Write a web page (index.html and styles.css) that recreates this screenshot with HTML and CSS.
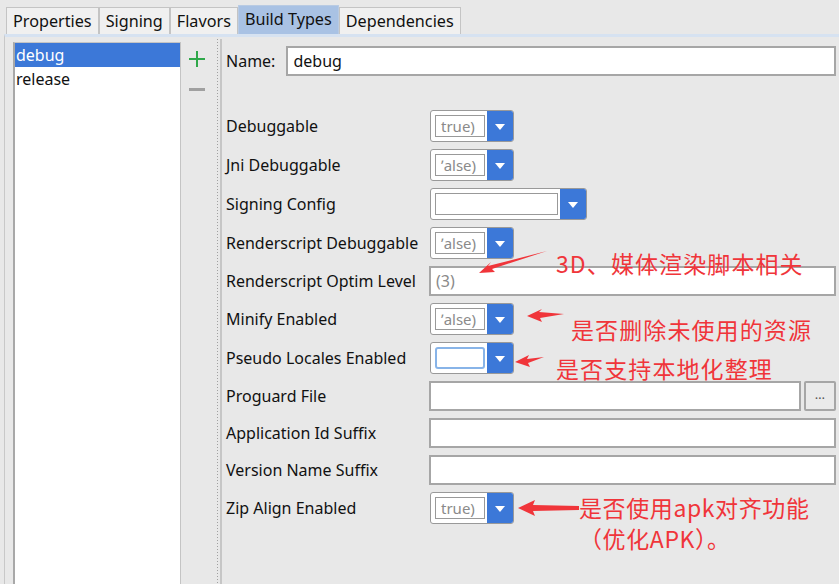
FILE: index.html
```html
<!DOCTYPE html>
<html lang="en">
<head>
  <meta charset="UTF-8" />
  <title>Build Types</title>
  <link rel="stylesheet" href="styles.css">
</head>
<body>
  <div class="tabs">
    <div class="tab">Properties</div>
    <div class="tab">Signing</div>
    <div class="tab">Flavors</div>
    <div class="tab active">Build Types</div>
    <div class="tab">Dependencies</div>
  </div>
  <div class="panel">
    <div class="grip"></div>
    <div class="list">
      <div class="item selected">debug</div>
      <div class="item">release</div>
    </div>
    <div class="tools">
      <span class="plus"></span>
      <span class="minus"></span>
    </div>
    <div class="splitter"></div>
    <div class="form">
      <div class="name-row">
        <span class="label">Name:</span>
        <div class="field name-field">debug</div>
      </div>
      <div class="rows">
        <div class="row combo-row">
          <span class="label">Debuggable</span>
          <div class="combo"><div class="value">true)</div><div class="drop"></div></div>
        </div>
        <div class="row combo-row">
          <span class="label">Jni Debuggable</span>
          <div class="combo"><div class="value">ʹalse)</div><div class="drop"></div></div>
        </div>
        <div class="row combo-row">
          <span class="label">Signing Config</span>
          <div class="combo wide"><div class="value"></div><div class="drop"></div></div>
        </div>
        <div class="row combo-row">
          <span class="label">Renderscript Debuggable</span>
          <div class="combo"><div class="value">ʹalse)</div><div class="drop"></div></div>
        </div>
        <div class="row text-row">
          <span class="label">Renderscript Optim Level</span>
          <div class="field hint">(3)</div>
        </div>
        <div class="row combo-row">
          <span class="label">Minify Enabled</span>
          <div class="combo"><div class="value">ʹalse)</div><div class="drop"></div></div>
        </div>
        <div class="row combo-row">
          <span class="label">Pseudo Locales Enabled</span>
          <div class="combo"><div class="value focus"></div><div class="drop"></div></div>
        </div>
        <div class="row text-row">
          <span class="label">Proguard File</span>
          <div class="field"></div>
          <div class="more">…</div>
        </div>
        <div class="row text-row">
          <span class="label">Application Id Suffix</span>
          <div class="field"></div>
        </div>
        <div class="row text-row">
          <span class="label">Version Name Suffix</span>
          <div class="field"></div>
        </div>
        <div class="row combo-row">
          <span class="label">Zip Align Enabled</span>
          <div class="combo"><div class="value">true)</div><div class="drop"></div></div>
        </div>
      </div>

      <svg class="arrows" width="617" height="545" viewBox="222 40 617 545">
        <polygon points="548,251 489,266 492,262 480,273 496,272 493,269" fill="#f0353a"/>
        <polygon points="565,314 540,312 543,309 528,316 543,322 541,318" fill="#f0353a"/>
        <polygon points="545,357 528,359 530,355 516,362 531,367 529,363" fill="#f0353a"/>
        <polygon points="580,506 534,505 536,500 519,508 536,516 534,511 580,510" fill="#f0353a"/>
      </svg>
      <div class="note n1">3D、媒体渲染脚本相关</div>
      <div class="note n2">是否删除未使用的资源</div>
      <div class="note n3">是否支持本地化整理</div>
      <div class="note n4">是否使用apk对齐功能<br>（优化APK）。</div>
    </div>
  </div>
</body>
</html>
```

FILE: styles.css
```css
:root {
  --bg: #e8e8e8;
  --border: #9a9a9a;
  --accent: #3c78d8;
  --tab-active: #a9c2e4;
  --note: #f0353a;
  --hint: #8a8a8a;
}
* { box-sizing: border-box; margin: 0; padding: 0; }
body {
  width: 839px; height: 584px; overflow: hidden;
  background: var(--bg);
  font-family: "Noto Sans", "Open Sans", sans-serif;
  font-size: 16px; color: #111;
}

.tabs { display: flex; padding: 7px 0 0 6px; height: 34px; align-items: flex-end; }
.tab {
  height: 27px; padding: 0 6px;
  border: 1px solid #c4c4c4; border-bottom: none;
  background: #f0f0f0;
  line-height: 26px; font-size: 16.2px;
}
.tab.active { height: 29px; background: var(--tab-active); border-color: #b9cbe3; }

.panel {
  display: flex; height: 550px;
  border-top: 3px solid #d6e2f1;
  border-left: 1px solid #c8c8c8;
  margin-left: 4px;
  padding-top: 5px;
}
.grip { width: 8px; }
.list {
  width: 168px; height: 545px; background: #fff;
  border-left: 2px solid #a8a8a8; border-right: 1px solid #c4c4c4;
  border-top: 1px solid #c4c4c4;
}
.item { height: 24px; line-height: 24px; padding-left: 1px; }
.item.selected { background: var(--accent); color: #fff; }
.tools {
  width: 32px; display: flex; flex-direction: column; align-items: center;
  padding-top: 9px;
}
.plus {
  width: 16px; height: 16px;
  background: linear-gradient(#2fa84a, #2fa84a) center / 16px 2px no-repeat,
              linear-gradient(#2fa84a, #2fa84a) center / 2px 16px no-repeat;
}
.minus { width: 16px; height: 3px; background: #a0a0a0; margin-top: 21px; }
.splitter {
  width: 9px; margin-top: -3px;
  border-right: 2px solid #c6c6c6;
  background: linear-gradient(#a0a0a0 50%, transparent 50%) 4px 0 / 1px 3px repeat-y;
}

.form { position: relative; flex: 1; padding: 4px 3px 0 4px; }
.name-row { display: flex; align-items: center; gap: 11px; height: 30px; }
.name-field { flex: 1; height: 30px; }
.rows { margin-top: 30px; display: flex; flex-direction: column; }
.row { display: flex; align-items: center; }
.combo-row { height: 39px; }
.text-row { height: 37px; }
.row .label { width: 203px; }

.field {
  background: #fff; border: 2px solid #a6a6a6;
  height: 30px; line-height: 26px; padding-left: 5px;
  flex: 1;
}
.field.hint { color: var(--hint); }
.more {
  width: 32px; height: 30px; margin-left: 3px;
  border: 2px solid #a6a6a6; border-radius: 2px; background: #eaeaea;
  text-align: center; line-height: 22px; font-size: 13px; color: #555;
}

.combo {
  display: flex; width: 84px; height: 32px; margin-left: 1px;
  background: #fff; border: 1px solid #999; border-radius: 3px; overflow: hidden;
}
.combo.wide { width: 157px; }
.combo .value {
  flex: 1; margin: 4px 2px 4px 4px;
  border: 1px solid #999; color: var(--hint);
  line-height: 20px; padding-left: 5px; font-size: 15px;
}
.combo .value.focus { border: 2px solid #88b4e8; border-radius: 3px; }
.drop {
  width: 26px; background: var(--accent); position: relative;
}
.drop::after {
  content: ""; position: absolute; left: 8px; top: 13px;
  border-left: 5px solid transparent; border-right: 5px solid transparent;
  border-top: 6px solid #fff;
}

.arrows { position: absolute; left: -1px; top: -2px; pointer-events: none; }
.note {
  position: absolute; color: var(--note);
  font-family: "Noto Sans CJK SC", sans-serif; font-size: 23px; line-height: 31px;
  letter-spacing: 1.1px;
}
.n1 { left: 334px; top: 206px; }
.n2 { left: 349px; top: 272px; }
.n3 { left: 334px; top: 311px; }
.n4 { left: 357px; top: 450px; letter-spacing: 0.6px; }
```
